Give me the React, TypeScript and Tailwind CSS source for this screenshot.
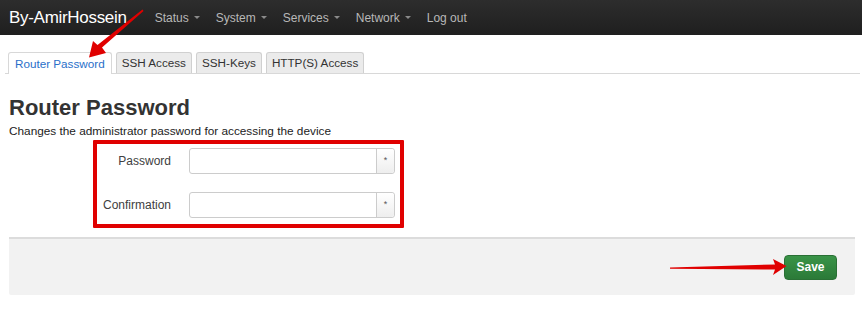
import { ReactNode } from "react";

const navItems = ["Status", "System", "Services", "Network"];
const tabs = ["Router Password", "SSH Access", "SSH-Keys", "HTTP(S) Access"];

function Caret() {
  return <span className="ml-[5px] inline-block align-middle border-x-[3px] border-t-[3px] border-x-transparent border-t-[#8a8a8a]" />;
}

function Field({ label }: { label: string }) {
  return (
    <div className="flex items-center h-[26px]">
      <label className="w-[167px] text-right text-[12px] text-[#404040]">{label}</label>
      <div className="ml-[18px] flex h-[26px] w-[206px] rounded-[3px] border border-[#cccccc] bg-white">
        <input type="password" className="flex-1 min-w-0 outline-none px-2 text-[12px]" />
        <span className="flex w-[18px] items-center justify-center border-l border-[#cccccc] bg-gradient-to-b from-white to-[#eeeeee] rounded-r-[3px] text-[9px] text-[#555]">
          *
        </span>
      </div>
    </div>
  );
}

function Overlay({ children }: { children: ReactNode }) {
  return <div className="pointer-events-none absolute inset-0">{children}</div>;
}

export default function App() {
  return (
    <div className="relative w-[862px] h-[317px] bg-white font-['Liberation_Sans',Arial,sans-serif] overflow-hidden">
      {/* navbar */}
      <div className="flex h-[35px] items-center bg-gradient-to-b from-[#2d2d2d] to-[#1f1f1f] text-[12px] text-[#b8b8b8]">
        <span className="ml-[9px] mr-[28px] text-[17px] text-white tracking-[-0.3px]">By-AmirHossein</span>
        {navItems.map((n) => (
          <span key={n} className="mr-[16px] flex items-center">
            {n}
            <Caret />
          </span>
        ))}
        <span>Log out</span>
      </div>

      {/* tabs */}
      <div className="mt-[18px] ml-[5px] mr-[2px] flex items-end gap-[4px] border-b border-[#d8d8d8] pl-[3px] h-[21px]">
        {tabs.map((t, i) =>
          i === 0 ? (
            <div
              key={t}
              className="-mb-px flex h-[22px] items-center rounded-t-[3px] border border-b-0 border-[#d8d8d8] bg-white px-[6px] text-[11.7px] text-[#2a6fc9]"
            >
              {t}
            </div>
          ) : (
            <div
              key={t}
              className="flex h-[21px] items-center rounded-t-[3px] border border-b-0 border-[#d0d0d0] bg-[#ebebeb] px-[5px] text-[11.7px] text-[#333]"
            >
              {t}
            </div>
          )
        )}
      </div>

      {/* heading */}
      <h2 className="ml-[9px] mt-[21px] text-[22px] font-bold leading-[26px] text-[#333]">Router Password</h2>
      <p className="ml-[9px] mt-[4px] text-[11.8px] leading-[13px] text-[#222]">
        Changes the administrator password for accessing the device
      </p>

      {/* form */}
      <div className="ml-[93px] mt-[2px] w-[311px] h-[88px] border-[4px] border-[#e00000] rounded-[1px] flex flex-col pt-[4px] gap-[18px]">
        <div className="-ml-[93px]">
          <Field label="Password" />
        </div>
        <div className="-ml-[93px]">
          <Field label="Confirmation" />
        </div>
      </div>

      {/* actions */}
      <div className="ml-[9px] mt-[9px] mr-[7px] h-[58px] flex items-center justify-end border-t-2 border-[#dcdcdc] bg-[#f2f2f2] rounded-b-[2px] pr-[18px]">
        <button className="h-[25px] w-[53px] rounded-[4px] bg-gradient-to-b from-[#3a9448] to-[#2b7a38] border border-[#2a7035] text-[12px] font-bold text-white">
          Save
        </button>
      </div>

      <Overlay>
        <svg width="862" height="317" className="absolute inset-0">
          {/* arrow to tab */}
          <path d="M142.5 9.5 L143.5 11 L102 47.5 L106 53 L89 57.5 L93 41 L97.5 45 Z" fill="#e00000" />
          {/* arrow to save */}
          <path d="M670 267.5 L775 264.5 L773 259 L786.5 266 L773 275 L775 269.5 L670 268.8 Z" fill="#e00000" />
        </svg>
      </Overlay>
    </div>
  );
}
